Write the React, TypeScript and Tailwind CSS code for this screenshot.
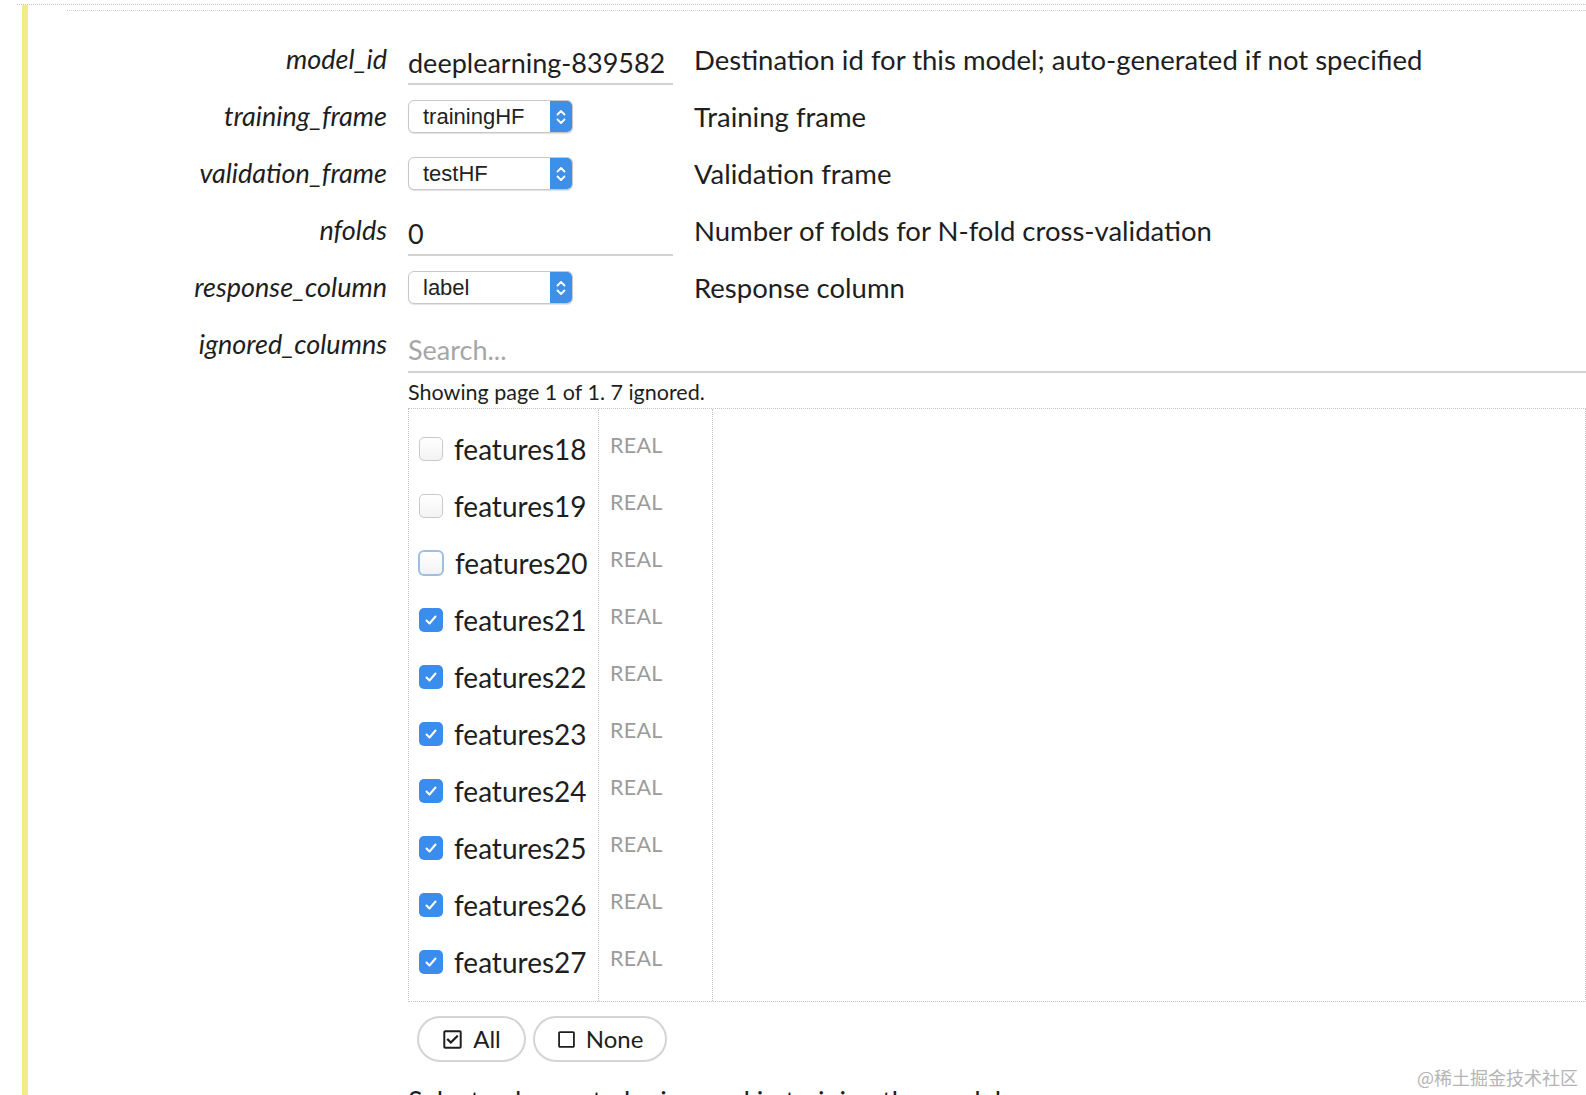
import { FaRegCheckSquare, FaRegSquare } from 'react-icons/fa'

const features = [
  { name: 'features18', checked: false },
  { name: 'features19', checked: false },
  { name: 'features20', checked: false, focus: true },
  { name: 'features21', checked: true },
  { name: 'features22', checked: true },
  { name: 'features23', checked: true },
  { name: 'features24', checked: true },
  { name: 'features25', checked: true },
  { name: 'features26', checked: true },
  { name: 'features27', checked: true },
]

function Select({ value }: { value: string }) {
  return (
    <div className="flex h-[33px] w-[165px] items-stretch overflow-hidden rounded-[6px] border border-[#c8c8c8] bg-white shadow-[0_1px_1px_rgba(0,0,0,0.12)]">
      <div className="flex flex-1 items-center pl-[14px] font-['Liberation_Sans',Arial,sans-serif] text-[22px] text-[#222]">
        {value}
      </div>
      <div className="flex w-[22px] flex-col items-center justify-center bg-[#3d8fe8]">
        <svg width="12" height="20" viewBox="0 0 12 20" fill="none" stroke="white" strokeWidth="1.8" strokeLinecap="round" strokeLinejoin="round">
          <path d="M2.5 7.5 6 4l3.5 3.5" />
          <path d="M2.5 12.5 6 16l3.5-3.5" />
        </svg>
      </div>
    </div>
  )
}

function Checkbox({ checked, focus }: { checked: boolean; focus?: boolean }) {
  if (checked) {
    return (
      <div className="flex h-[24px] w-[24px] items-center justify-center rounded-[5px] bg-[#3a8ded]">
        <svg width="16" height="16" viewBox="0 0 16 16" fill="none" stroke="white" strokeWidth="2" strokeLinecap="round" strokeLinejoin="round">
          <path d="M3.5 8.5 6.5 11.5 12.5 4.5" />
        </svg>
      </div>
    )
  }
  return (
    <div
      className={
        focus
          ? 'h-[26px] w-[26px] -ml-[1px] rounded-[6px] border-2 border-[#9cbfe6] bg-gradient-to-b from-white to-[#f3f3f3]'
          : 'h-[24px] w-[24px] rounded-[5px] border border-[#c9c9c9] bg-gradient-to-b from-white to-[#f3f3f3]'
      }
    />
  )
}

export default function App() {
  return (
    <div className="relative h-[1095px] w-full overflow-hidden bg-white font-['Lato',sans-serif] text-[#1e1e1e]">
      {/* outer cell border */}
      <div className="ml-[17px] mt-[4px] border-t border-dotted border-[#c4c4c4]" />
      <div className="flex">
        <div className="ml-[22px] h-[1095px] w-[6px] bg-[#f3eb8a]" />
        <div className="flex-1">
          <div className="ml-[39px] mt-[5px] border-t border-dotted border-[#cfcfcf]" />

          <div className="mt-[20px] grid grid-cols-[359px_265px_1fr] items-center gap-x-[21px]">
            <div className="flex h-[57px] items-center justify-end text-[27px] italic">model_id</div>
            <div className="flex h-[57px] items-end pb-[3px]">
              <div className="w-full border-b-2 border-[#d2d2d2] pb-[3px] text-[27px] leading-[34px]">deeplearning-839582</div>
            </div>
            <div className="text-[27.5px]">Destination id for this model; auto-generated if not specified</div>

            <div className="flex h-[57px] items-center justify-end text-[27px] italic">training_frame</div>
            <div><Select value="trainingHF" /></div>
            <div className="text-[27.5px]">Training frame</div>

            <div className="flex h-[57px] items-center justify-end text-[27px] italic">validation_frame</div>
            <div><Select value="testHF" /></div>
            <div className="text-[27.5px]">Validation frame</div>

            <div className="flex h-[57px] items-center justify-end text-[27px] italic">nfolds</div>
            <div className="flex h-[57px] items-end pb-[3px]">
              <div className="w-full border-b-2 border-[#d2d2d2] pb-[3px] text-[27px] leading-[34px]">0</div>
            </div>
            <div className="text-[27.5px]">Number of folds for N-fold cross-validation</div>

            <div className="flex h-[57px] items-center justify-end text-[27px] italic">response_column</div>
            <div><Select value="label" /></div>
            <div className="text-[27.5px]">Response column</div>

            <div className="flex h-[57px] items-center justify-end self-start text-[27px] italic">ignored_columns</div>
            <div className="col-span-2">
              <div className="flex h-[57px] items-end">
                <div className="w-full border-b-2 border-[#d2d2d2] pb-[4px] text-[27px] leading-[34px] text-[#a6a6a6]">Search...</div>
              </div>
              <div className="mt-[6px] text-[21.5px] leading-[26px]">Showing page 1 of 1. 7 ignored.</div>
              <div className="mt-[3px] border border-dotted border-[#c4c4c4]">
                <div className="grid w-[305px] grid-cols-[190px_114px]">
                  <div className="border-r border-dotted border-[#c4c4c4] pb-[11px] pt-[11px]">
                    {features.map((f) => (
                      <div key={f.name} className="flex h-[57px] items-center gap-[11px] pl-[10px]">
                        <Checkbox checked={f.checked} focus={f.focus} />
                        <span className="text-[28px]">{f.name}</span>
                      </div>
                    ))}
                  </div>
                  <div className="border-r border-dotted border-[#c4c4c4] pb-[11px] pt-[11px]">
                    {features.map((f) => (
                      <div key={f.name} className="flex h-[57px] items-center pb-[6px] pl-[11px] text-[21.5px] tracking-[0.3px] text-[#9b9b9b]">
                        REAL
                      </div>
                    ))}
                  </div>
                </div>
              </div>
              <div className="mt-[14px] flex gap-[7px] pl-[9px]">
                <button className="flex h-[46px] w-[109px] items-center justify-center gap-[10px] rounded-full border-2 border-[#d4d4d4] bg-white text-[24px]">
                  <FaRegCheckSquare className="h-[21px] w-[21px]" />
                  All
                </button>
                <button className="flex h-[46px] w-[134px] items-center justify-center gap-[10px] rounded-full border-2 border-[#d4d4d4] bg-white text-[24px]">
                  <FaRegSquare className="h-[19px] w-[19px]" />
                  None
                </button>
              </div>
              <div className="mt-[23px] text-[27px] leading-[32px]">Select columns to be ignored in training the model.</div>
            </div>
          </div>
        </div>
      </div>

      <div className="absolute bottom-[4px] right-[8px] font-['Noto_Sans_CJK_SC',sans-serif] text-[18px] text-[#b4b4b4]">
        @稀土掘金技术社区
      </div>
    </div>
  )
}
